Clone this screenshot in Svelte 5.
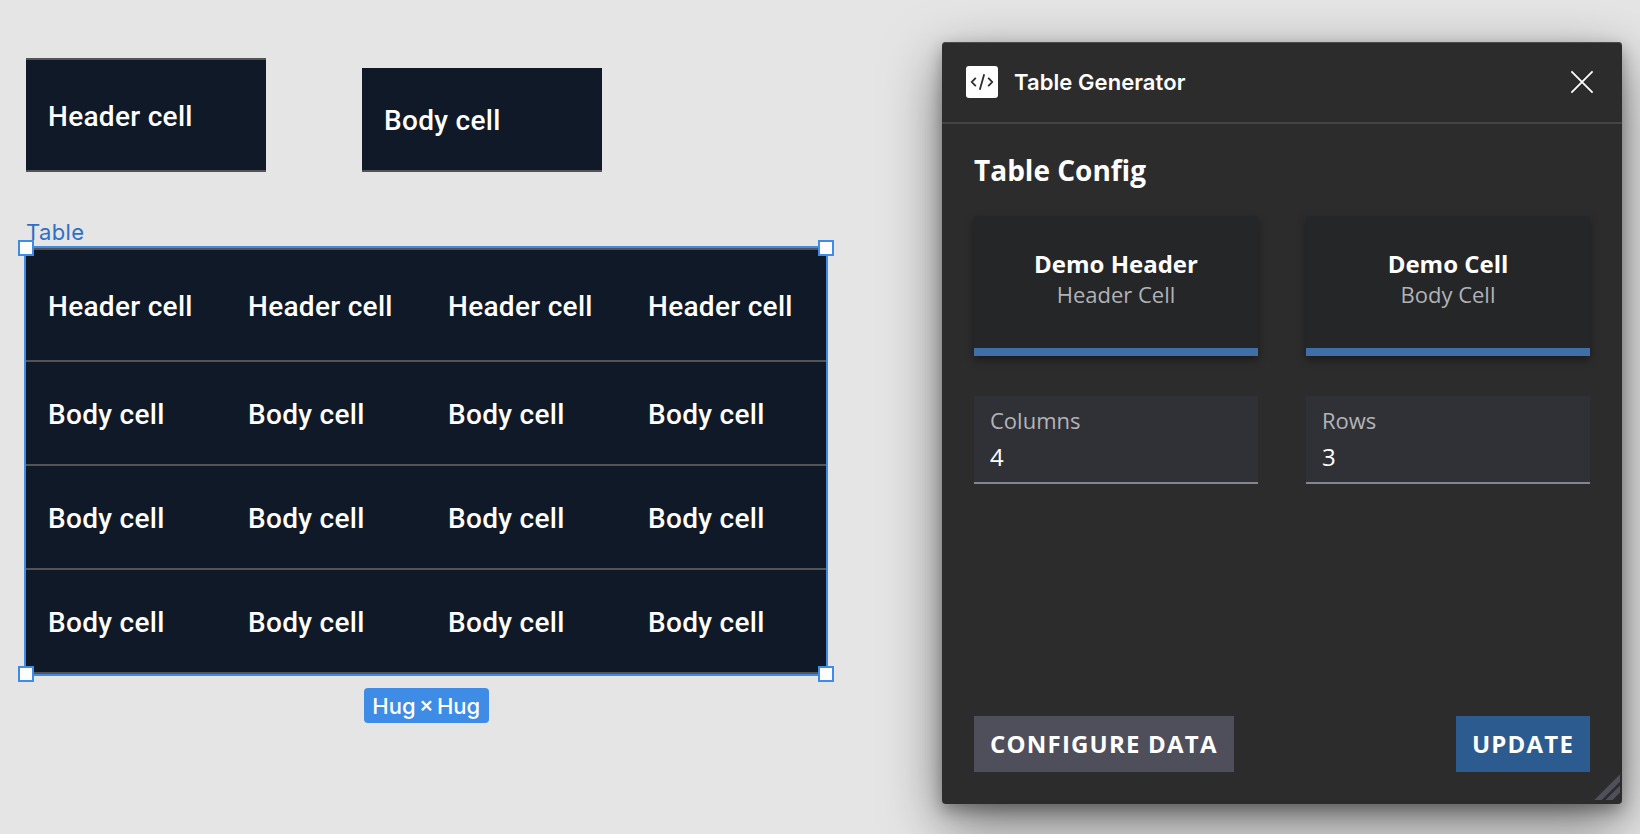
<script>
  const columns = 4;
  const rows = 3;
  const columnList = Array.from({ length: columns });
  const rowList = Array.from({ length: rows });
  const cards = [
    { name: 'Demo Header', kind: 'Header Cell' },
    { name: 'Demo Cell', kind: 'Body Cell' }
  ];
  const fields = [
    { label: 'Columns', value: columns },
    { label: 'Rows', value: rows }
  ];
</script>

<main class="canvas">
  <div class="node header-node"><div class="cell header">Header cell</div></div>
  <div class="node body-node"><div class="cell">Body cell</div></div>

  <div class="frame-label">Table</div>
  <section class="node table">
    <div class="row">
      {#each columnList as _}<div class="cell header">Header cell</div>{/each}
    </div>
    {#each rowList as _}
      <div class="row">
        {#each columnList as _}<div class="cell">Body cell</div>{/each}
      </div>
    {/each}
    <i class="handle tl"></i><i class="handle tr"></i>
    <i class="handle bl"></i><i class="handle br"></i>
  </section>
  <div class="size-badge">Hug × Hug</div>

  <section class="window">
    <header>
      <svg class="logo" width="32" height="32" viewBox="0 0 32 32">
        <rect width="32" height="32" rx="3" fill="#fff" />
        <path d="M9.800 11.800 5.800 16l4 4.200M22.200 11.800l4 4.200-4 4.200M18.200 8.300l-4.400 15.400" fill="none" stroke="#2c2c2c" stroke-width="1.800" />
      </svg>
      <h1>Table Generator</h1>
      <svg class="close" width="24" height="24" viewBox="0 0 24 24">
        <path d="M1.400 1.400 22.600 22.600M22.600 1.400 1.400 22.600" fill="none" stroke="#fff" stroke-width="1.800" />
      </svg>
    </header>
    <div class="content">
      <h2>Table Config</h2>
      <div class="pair cards">
        {#each cards as card}
          <div class="card"><strong>{card.name}</strong><span>{card.kind}</span></div>
        {/each}
      </div>
      <div class="pair">
        {#each fields as field}
          <div class="field"><span class="label">{field.label}</span><span class="value">{field.value}</span></div>
        {/each}
      </div>
      <footer>
        <button class="secondary">CONFIGURE DATA</button>
        <button class="primary">UPDATE</button>
      </footer>
    </div>
    <svg class="grip" width="26" height="26" viewBox="0 0 26 26">
      <path d="M.3 26 26 .3v7.500L7.800 26zM11.400 26 26 11.400v7.200L18.600 26z" fill="#4f505c" />
    </svg>
  </section>
</main>

<style>
  :global(body) { margin: 0; overflow: hidden; }
  .canvas {
    position: relative;
    width: 1640px;
    height: 834px;
    overflow: hidden;
    background: #e5e5e5;
    font-family: Inter, sans-serif;
  }
  .node { position: absolute; }
  .header-node { left: 26px; top: 58px; width: 240px; }
  .body-node { left: 362px; top: 68px; width: 240px; }
  .cell {
    box-sizing: border-box;
    height: 104px;
    padding: 36px 0 0 22px;
    border-bottom: 2px solid #545454;
    background: #101927;
    color: #fff;
    font: 500 28px/34px Roboto, sans-serif;
    letter-spacing: 0.3px;
    white-space: nowrap;
  }
  .cell.header { height: 114px; padding-top: 40px; border-top: 2px solid #545454; }
  .table { left: 26px; top: 248px; width: 800px; box-shadow: 0 0 0 2px #3f8ce6; }
  .row { display: grid; grid-template-columns: repeat(4, 1fr); }
  .frame-label {
    position: absolute;
    left: 26px;
    top: 218px;
    color: #2f6fc3;
    font-size: 22px;
    line-height: 28px;
    letter-spacing: 0.4px;
  }
  .handle {
    position: absolute;
    box-sizing: border-box;
    width: 16px;
    height: 16px;
    border: 2px solid #3f8ce6;
    background: #fdfdfd;
  }
  .tl, .tr { top: -8px; }
  .bl, .br { bottom: -8px; }
  .tl, .bl { left: -8px; }
  .tr, .br { right: -8px; }
  .size-badge {
    position: absolute;
    left: 364px;
    top: 688px;
    width: 124.500px;
    height: 35px;
    border-radius: 4px;
    background: #3f8ce6;
    color: #fff;
    font-size: 22px;
    font-weight: 500;
    line-height: 36px;
    word-spacing: -2.500px;
    text-align: center;
    white-space: nowrap;
  }
  .window {
    position: absolute;
    left: 942px;
    top: 42px;
    width: 680px;
    height: 762px;
    display: flex;
    flex-direction: column;
    border-radius: 4px;
    background: #2c2c2c;
    color: #fff;
    box-shadow: inset 0 1px #4b4b4b, 0 20px 56px rgba(0, 0, 0, 0.5), 0 6px 16px rgba(0, 0, 0, 0.3);
  }
  header {
    box-sizing: border-box;
    height: 82px;
    padding: 0 28px 0 24px;
    display: flex;
    align-items: center;
    border-bottom: 2px solid #444;
  }
  h1 { margin: 0 auto 0 16px; font-size: 22px; font-weight: 600; line-height: 28px; letter-spacing: 0.07px; }
  .content {
    flex: 1;
    display: flex;
    flex-direction: column;
    padding: 27px 32px 32px;
    font-family: 'Open Sans', sans-serif;
  }
  h2 { margin: 0; font-size: 28px; font-weight: 700; line-height: 38px; }
  .pair { display: grid; grid-template-columns: 284px 284px; gap: 48px; }
  .cards { margin: 27px 0 40px; }
  .card {
    box-sizing: border-box;
    height: 140px;
    padding-top: 32px;
    display: flex;
    flex-direction: column;
    align-items: center;
    border-bottom: 8px solid #3e6fa7;
    background: #252628;
    box-shadow: 0 4px 8px rgba(0, 0, 0, 0.4);
  }
  .card strong { font-size: 24px; font-weight: 700; line-height: 32px; }
  .card span { margin-top: -1px; color: #b1b2b7; font-size: 22px; line-height: 30px; }
  .field {
    box-sizing: border-box;
    height: 88px;
    padding: 9px 16px 0;
    display: flex;
    flex-direction: column;
    border-bottom: 2px solid #85868d;
    background: #303136;
  }
  .label { color: #b4b4b6; font-size: 22px; line-height: 30px; }
  .value { font-size: 24px; line-height: 32px; margin-top: 6px; }
  footer { margin-top: auto; display: flex; justify-content: space-between; }
  button {
    height: 56px;
    padding: 0 16px;
    border: 0;
    color: #fff;
    font: 700 24px/56px 'Open Sans', sans-serif;
    letter-spacing: 1.200px;
    text-align: left;
    white-space: nowrap;
  }
  .secondary { width: 260px; background: #4e4f5b; }
  .primary { width: 134px; background: #2c5b8f; }
  .grip { position: absolute; right: 2px; bottom: 4px; }
</style>
